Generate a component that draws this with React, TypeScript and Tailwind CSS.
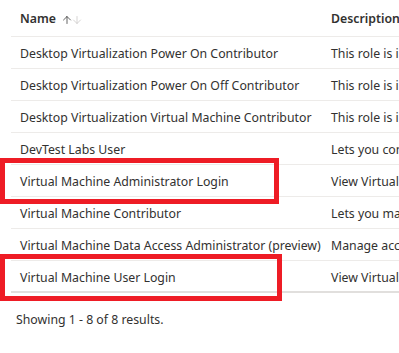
import { ArrowUp, ArrowDown } from "lucide-react";

type Role = {
  name: string;
  description: string;
};

const ROLES: Role[] = [
  { name: "Desktop Virtualization Power On Contributor", description: "This role is in preview and subject to changes." },
  { name: "Desktop Virtualization Power On Off Contributor", description: "This role is in preview and subject to changes." },
  { name: "Desktop Virtualization Virtual Machine Contributor", description: "This role is in preview and subject to changes." },
  { name: "DevTest Labs User", description: "Lets you connect, start, restart, and shutdown your virtual machines." },
  { name: "Virtual Machine Administrator Login", description: "View Virtual Machines in the portal and login as administrator" },
  { name: "Virtual Machine Contributor", description: "Lets you manage virtual machines, but not access to them." },
  { name: "Virtual Machine Data Access Administrator (preview)", description: "Manage access to Virtual Machines by adding or removing role assignments." },
  { name: "Virtual Machine User Login", description: "View Virtual Machines in the portal and login as a regular user." },
];

export default function App() {
  return (
    <div className="relative w-[399px] h-[353px] overflow-hidden bg-white text-[12.3px] text-[#323130] font-['Segoe_UI','Noto_Sans','Open_Sans',sans-serif]">
      <div className="pl-[11px]">
        {/* Header */}
        <div className="grid grid-cols-[311px_1fr] h-[37px] pt-[2px] items-center border-b border-[#edebe9]">
          <div className="pl-[9px] flex items-center gap-[5px] font-semibold whitespace-nowrap">
            Name
            <span className="flex items-center -space-x-[2px] pt-[1px]">
              <ArrowUp size={12} strokeWidth={1.5} className="text-[#323130]" />
              <ArrowDown size={12} strokeWidth={1.5} className="text-[#c8c6c4]" />
            </span>
          </div>
          <div className="pl-[9px] font-semibold whitespace-nowrap overflow-hidden">Description</div>
        </div>

        {/* Rows */}
        {ROLES.map((r, i) => (
          <div
            key={r.name}
            className={`grid grid-cols-[311px_1fr] h-[32px] pt-[4px] items-center ${
              i === ROLES.length - 1 ? "border-b-2 border-[#e1dfdd]" : "border-b border-[#edebe9]"
            }`}
          >
            <div className="pl-[9px] whitespace-nowrap overflow-hidden">{r.name}</div>
            <div className="pl-[9px] whitespace-nowrap overflow-hidden">{r.description}</div>
          </div>
        ))}
      </div>

      <p className="pl-[16px] pt-[18px]">Showing 1 - 8 of 8 results.</p>

      {/* Highlight boxes */}
      <div className="absolute left-0 top-[158px] w-[279px] h-[46px] border-[5px] border-[#ee1c25]" />
      <div className="absolute left-0 top-[254px] w-[282px] h-[47px] border-[5px] border-[#ee1c25]" />
    </div>
  );
}
